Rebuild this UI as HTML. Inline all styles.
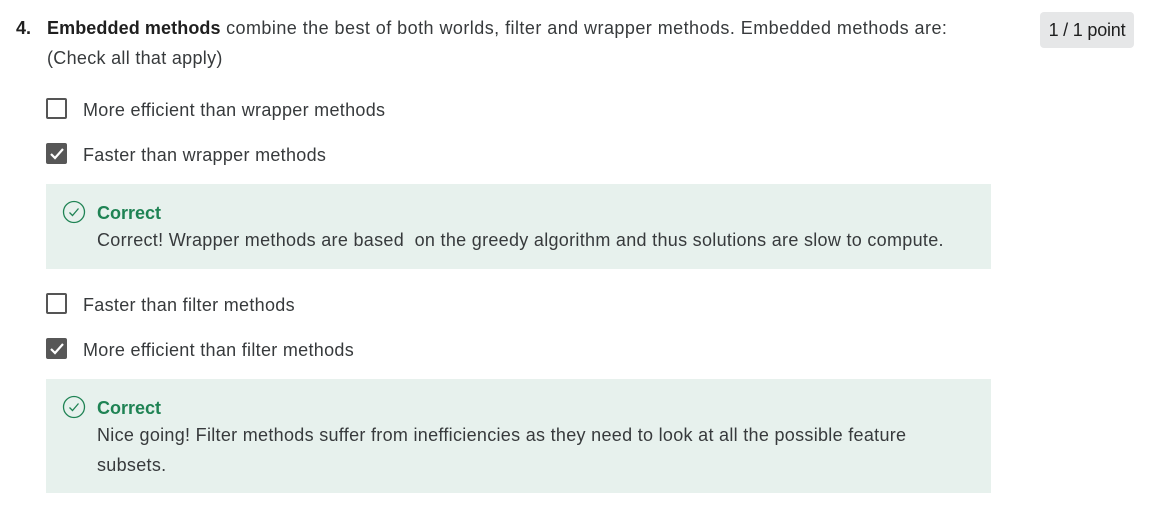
<!DOCTYPE html>
<html><head><meta charset="utf-8"><style>
body{margin:0;width:1155px;height:516px;background:#fff;font-family:"Liberation Sans",sans-serif;color:#373a3c;position:relative;overflow:hidden}
.t{position:absolute;white-space:nowrap;font-size:18px;line-height:20px;letter-spacing:0.3px}
.cb{position:absolute;left:46px;width:17px;height:17px;border:2px solid #555;border-radius:2px;background:#fff}
.cb.on{background:#575757;border-color:#575757}
.box{position:absolute;left:46px;width:945px;background:#e7f1ed}
.g{color:#1f8354;font-weight:bold;letter-spacing:0}
</style></head><body>
<div class="t" style="left:16px;top:18px;font-weight:bold;color:#1f1f1f;letter-spacing:0">4.</div>
<div class="t" style="left:47px;top:18px;letter-spacing:0.45px"><b style="color:#1f1f1f;letter-spacing:0.1px">Embedded methods</b> combine the best of both worlds, filter and wrapper methods. Embedded methods are:</div>
<div class="t" style="left:47px;top:48px">(Check all that apply)</div>
<div style="position:absolute;left:1040px;top:12px;width:94px;height:36px;background:#e6e7e8;border-radius:4px;font-size:18px;line-height:36px;text-align:center;color:#1f1f1f;letter-spacing:-0.2px;white-space:nowrap">1 / 1 point</div>

<div class="cb" style="top:98px"></div>
<div class="t" style="left:83px;top:100px">More efficient than wrapper methods</div>
<div class="cb on" style="top:143px"><svg width="17" height="17" viewBox="0 0 17 17"><path d="M3 9l4 4 8-9" stroke="#fff" stroke-width="2.2" fill="none"/></svg></div>
<div class="t" style="left:83px;top:145px">Faster than wrapper methods</div>

<div class="box" style="top:184px;height:85px"></div>
<svg style="position:absolute;left:62px;top:200px" width="24" height="24" viewBox="0 0 24 24"><circle cx="12" cy="12" r="10.5" stroke="#1f8354" stroke-width="1.3" fill="none"/><path d="M7.5 12.5l3 3 6-7" stroke="#1f8354" stroke-width="1.3" fill="none"/></svg>
<div class="t g" style="left:97px;top:203px">Correct</div>
<div class="t" style="left:97px;top:230px">Correct! Wrapper methods are based&nbsp; on the greedy algorithm and thus solutions are slow to compute.</div>

<div class="cb" style="top:293px"></div>
<div class="t" style="left:83px;top:295px">Faster than filter methods</div>
<div class="cb on" style="top:338px"><svg width="17" height="17" viewBox="0 0 17 17"><path d="M3 9l4 4 8-9" stroke="#fff" stroke-width="2.2" fill="none"/></svg></div>
<div class="t" style="left:83px;top:340px">More efficient than filter methods</div>

<div class="box" style="top:379px;height:114px"></div>
<svg style="position:absolute;left:62px;top:395px" width="24" height="24" viewBox="0 0 24 24"><circle cx="12" cy="12" r="10.5" stroke="#1f8354" stroke-width="1.3" fill="none"/><path d="M7.5 12.5l3 3 6-7" stroke="#1f8354" stroke-width="1.3" fill="none"/></svg>
<div class="t g" style="left:97px;top:398px">Correct</div>
<div class="t" style="left:97px;top:425px">Nice going! Filter methods suffer from inefficiencies as they need to look at all the possible feature</div>
<div class="t" style="left:97px;top:455px">subsets.</div>
</body></html>
